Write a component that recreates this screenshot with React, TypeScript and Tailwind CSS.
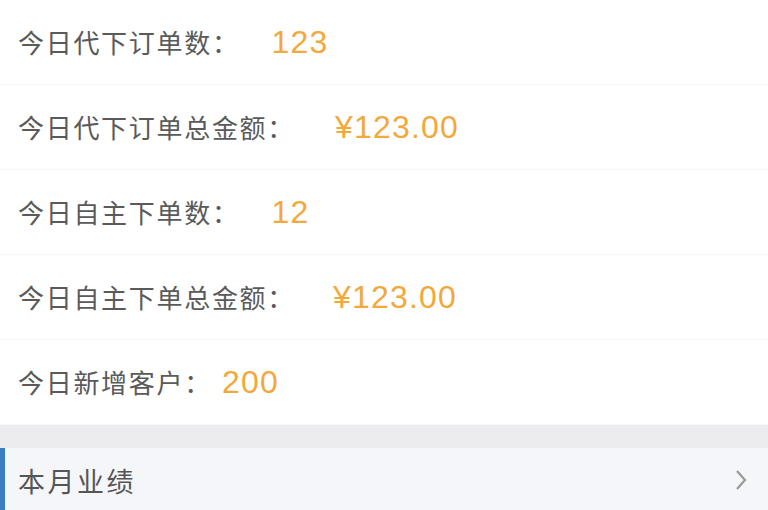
import React from "react";

const rows = [
  { label: "今日代下订单数：", value: "123", ml: "ml-[32px]" },
  { label: "今日代下订单总金额：", value: "¥123.00", ml: "ml-[40px]" },
  { label: "今日自主下单数：", value: "12", ml: "ml-[32px]" },
  { label: "今日自主下单总金额：", value: "¥123.00", ml: "ml-[38px]" },
  { label: "今日新增客户：", value: "200", ml: "ml-[10px]" },
];

export default function App() {
  return (
    <div
      className="w-[768px] h-[510px] overflow-hidden bg-white"
      style={{ fontFamily: '"Noto Sans CJK SC", "Noto Sans", sans-serif' }}
    >
      {rows.map((r, i) => (
        <div
          key={i}
          className="h-[85px] flex items-center pl-[18px] border-b border-[#f7f7f7]"
        >
          <span className="text-[26px] leading-none text-[#5a5a5a] tracking-[1.7px]">
            {r.label}
          </span>
          <span
            className={`${r.ml} text-[32px] leading-none text-[#f3a83c] tracking-[1.2px]`}
            style={{ fontFamily: '"Liberation Sans", sans-serif' }}
          >
            {r.value}
          </span>
        </div>
      ))}
      <div className="h-[23px] bg-[#ececee]" />
      <div className="h-[64px] bg-[#f5f6f9] flex items-center">
        <div className="w-[5px] self-stretch bg-[#3a7dc0]" />
        <span className="ml-[13px] text-[27px] leading-none text-[#555] tracking-[2.5px]">
          本月业绩
        </span>
        <div className="flex-1" />
        <svg width="14" height="24" viewBox="0 0 14 24" className="mr-[20px]">
          <path d="M3 3 L11 12 L3 21" fill="none" stroke="#999" strokeWidth="2.2" />
        </svg>
      </div>
    </div>
  );
}
